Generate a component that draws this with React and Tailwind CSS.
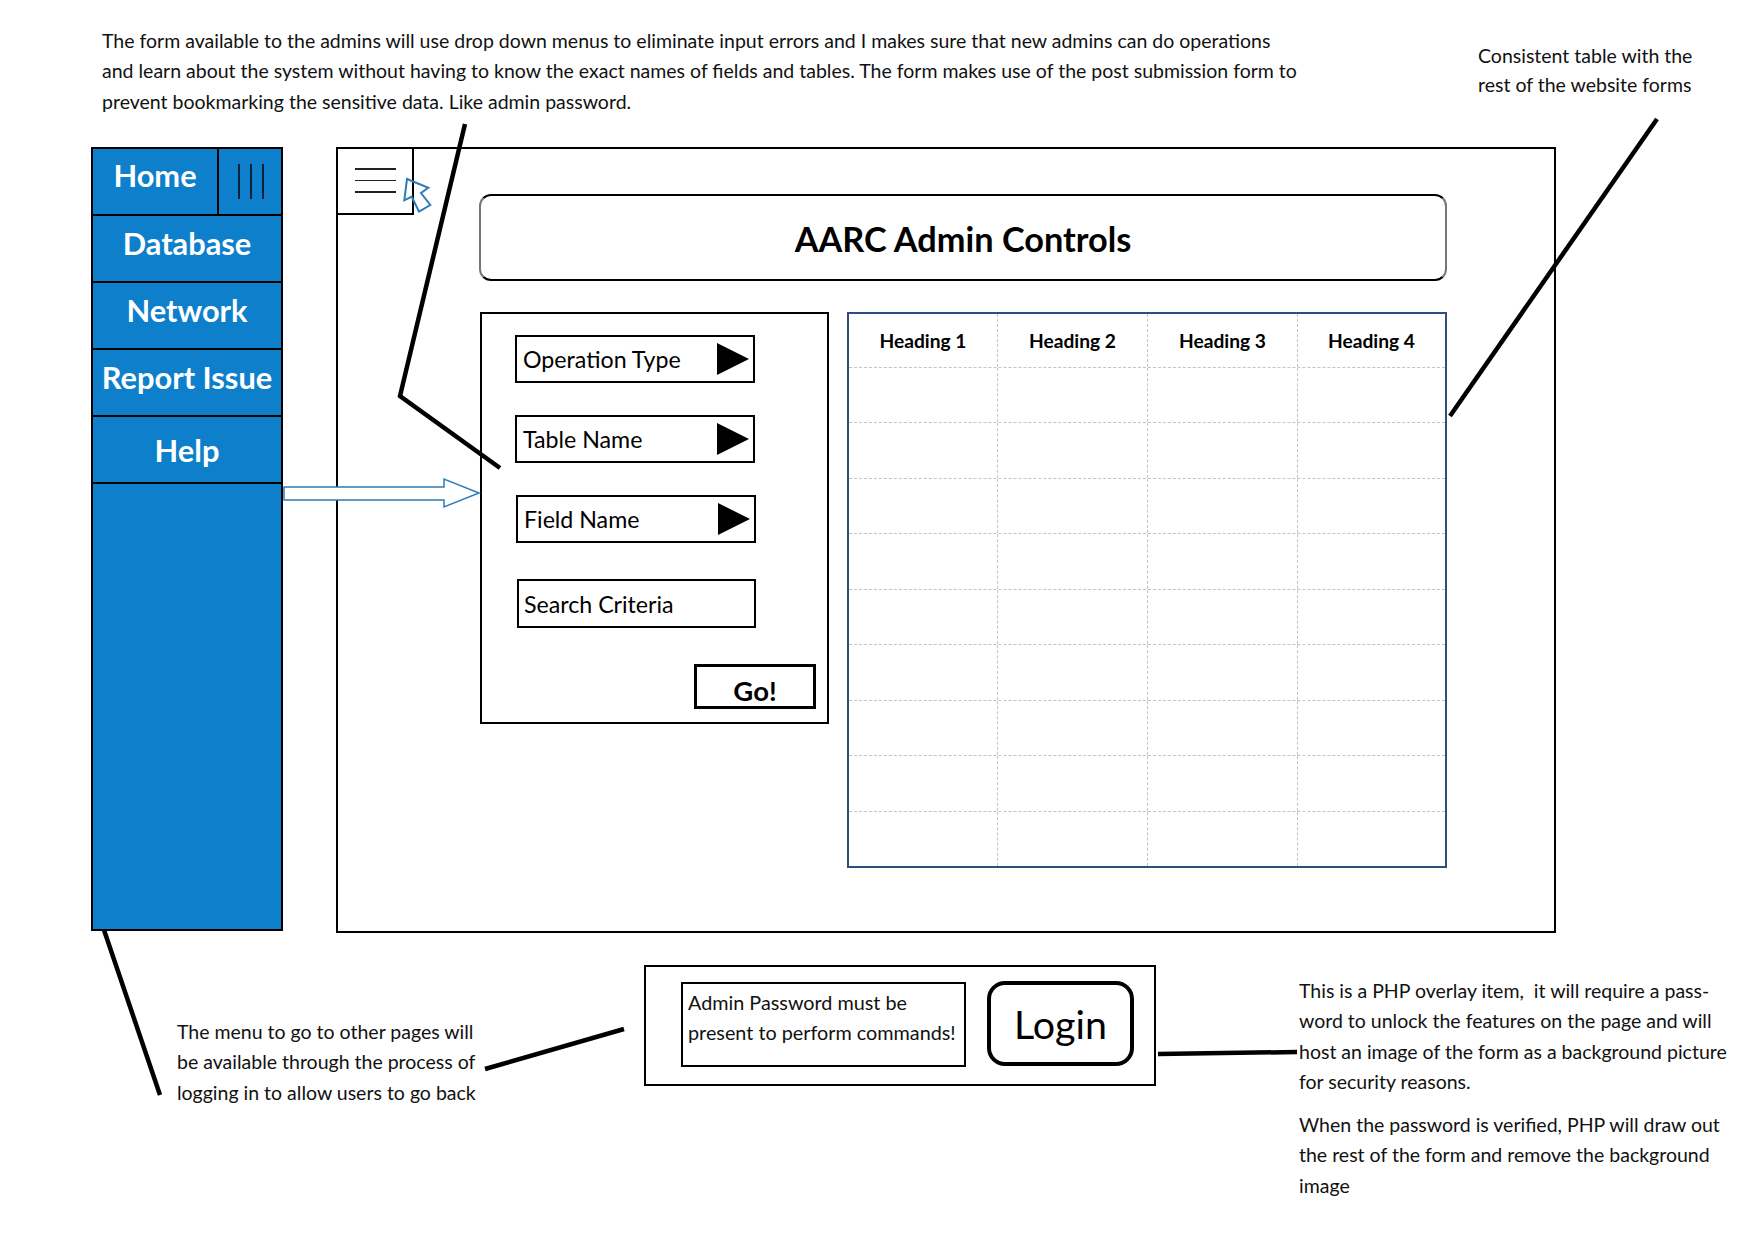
const FONT = "font-['Lato','Open_Sans',sans-serif]";

const topNote = [
  "The form available to the admins will use drop down menus to eliminate input errors and I makes sure that new admins can do operations",
  "and learn about the system without having to know the exact names of fields and tables. The form makes use of the post submission form to",
  "prevent bookmarking the sensitive data. Like admin password.",
];
const tableNote = ["Consistent table with the", "rest of the website forms"];
const menuNote = [
  "The menu to go to other pages will",
  "be available through the process of",
  "logging in to allow users to go back",
];
const overlayNote = [
  "This is a PHP overlay item,  it will require a pass-",
  "word to unlock the features on the page and will",
  "host an image of the form as a background picture",
  "for security reasons.",
];
const verifyNote = [
  "When the password is verified, PHP will draw out",
  "the rest of the form and remove the background",
  "image",
];

const navItems = [
  { label: "Database", offset: "pb-[9px]" },
  { label: "Network", offset: "pb-[9px]" },
  { label: "Report Issue", offset: "pb-[9px]" },
  { label: "Help", offset: "pt-[3px]" },
];
const headings = ["Heading 1", "Heading 2", "Heading 3", "Heading 4"];
const rows = [0, 1, 2, 3, 4, 5, 6, 7, 8];

function Note({ lines, leading = "leading-[30.3px]" }) {
  return (
    <div className={`text-[19.5px] ${leading} text-[#111] whitespace-pre`}>
      {lines.map((line) => (
        <div key={line}>{line}</div>
      ))}
    </div>
  );
}

function Sidebar() {
  return (
    <aside className="w-[192px] h-[784px] shrink-0 bg-[#0e7fcb] border-2 border-black flex flex-col text-white font-bold text-[30.8px]">
      <div className="h-[67px] shrink-0 flex border-b-2 border-black">
        <div className="w-[126px] border-r-2 border-black flex justify-center pt-[9px] leading-[36px]">Home</div>
        <div className="flex-1 flex justify-center gap-[10px] pt-[15px] pl-[1px]">
          <span className="w-[2px] h-[35px] bg-[#0b2238]" />
          <span className="w-[2px] h-[35px] bg-[#0b2238]" />
          <span className="w-[2px] h-[35px] bg-[#0b2238]" />
        </div>
      </div>
      {navItems.map((item) => (
        <div key={item.label} className={`${item.offset} h-[67px] shrink-0 flex items-center justify-center border-b-2 border-black`}>
          {item.label}
        </div>
      ))}
    </aside>
  );
}

function Dropdown({ label, className = "" }) {
  return (
    <div className={`w-[240px] h-[48px] border-2 border-black flex items-center justify-between pl-[6px] pr-[4px] ${className}`}>
      <span className="text-[23.2px] pt-[1px]">{label}</span>
      <svg width="32" height="32" viewBox="0 0 32 32">
        <path d="M0 0 L32 16 L0 32 Z" fill="#000" />
      </svg>
    </div>
  );
}

function AdminForm() {
  return (
    <form className="w-[349px] h-[412px] ml-[1px] border-2 border-black shrink-0 flex flex-col pt-[21px] pl-[33px]">
      <Dropdown label="Operation Type" />
      <Dropdown label="Table Name" className="mt-[32px]" />
      <Dropdown label="Field Name" className="mt-[32px] ml-[1px]" />
      <div className="w-[239px] h-[49px] mt-[36px] ml-[2px] border-2 border-black flex items-center pl-[5px] text-[23.2px]">
        <span className="pt-[1px]">Search Criteria</span>
      </div>
      <div className="w-[122px] h-[45px] mt-[36px] ml-[179px] border-[3px] border-black flex justify-center pt-[6px] font-bold text-[27.5px] leading-[36px]">
        Go!
      </div>
    </form>
  );
}

function DataTable() {
  return (
    <div className="w-[600px] h-[556px] border-2 border-[#2c4f7c] shrink-0 flex flex-col">
      <div className="h-[54px] shrink-0 grid grid-cols-[149px_150px_150px_1fr] border-b border-dashed border-[#c4c4c4]">
        {headings.map((heading, i) => (
          <div
            key={heading}
            className={`flex items-center justify-center font-bold text-[19.2px] pt-[2px] ${i < 3 ? "border-r border-dashed border-[#c4c4c4]" : ""}`}
          >
            {heading}
          </div>
        ))}
      </div>
      {rows.map((row) => (
        <div key={row} className="flex-1 grid grid-cols-[149px_150px_150px_1fr] border-b border-dashed border-[#c4c4c4] last:border-b-0">
          {headings.map((heading, i) => (
            <div key={heading} className={i < 3 ? "border-r border-dashed border-[#c4c4c4]" : ""} />
          ))}
        </div>
      ))}
    </div>
  );
}

function MainWindow() {
  return (
    <main className="relative w-[1220px] h-[786px] ml-[53px] border-2 border-black pl-[141px] pt-[45px]">
      <div className="absolute left-[-2px] top-[-2px] w-[78px] h-[68px] border-2 border-black flex flex-col items-center pt-[19px] gap-[10px]">
        <span className="w-[41px] h-[1.5px] bg-[#222]" />
        <span className="w-[41px] h-[1.5px] bg-[#222]" />
        <span className="w-[41px] h-[1.5px] bg-[#222]" />
      </div>
      <div className="w-[968px] h-[87px] rounded-[12px] border-2 border-x-[#777] border-y-black flex items-center justify-center font-bold text-[34.3px] pt-[2px]">
        AARC Admin Controls
      </div>
      <div className="flex gap-[18px] mt-[31px]">
        <AdminForm />
        <DataTable />
      </div>
    </main>
  );
}

function LoginBox() {
  return (
    <div className="w-[512px] h-[121px] mt-[32px] shrink-0 border-2 border-black flex pl-[35px] pt-[15px]">
      <div className="w-[285px] h-[85px] border-2 border-black pl-[5px] pt-[3px] text-[19.8px] leading-[30px] text-[#111] whitespace-nowrap">
        <div>Admin Password must be</div>
        <div>present to perform commands!</div>
      </div>
      <div className="w-[147px] h-[85px] ml-[21px] -mt-[1px] rounded-[18px] border-[4px] border-black flex items-center justify-center text-[39.4px] pt-[1px]">
        Login
      </div>
    </div>
  );
}

// connector lines and callout shapes sitting on top of the wireframe
function Callouts() {
  return (
    <svg className="absolute left-0 top-0 pointer-events-none" width="1754" height="1240" viewBox="0 0 1754 1240" fill="none">
      <g stroke="#000" strokeWidth="4.5">
        <path d="M465 124 L400 396 L500 468" />
        <path d="M1657 119 L1450 416" />
        <path d="M104 930 L160 1095" />
        <path d="M485 1069 L624 1029" />
        <path d="M1158 1054 L1297 1052" />
      </g>
      <g stroke="#2e7cb8" strokeWidth="1.5">
        <path d="M284 487 L444 487 L444 479 L479 493 L444 507 L444 500 L284 500 Z" fill="#fff" />
        <path strokeWidth="2" d="M407 179 L428.3 187.7 L421 193 L430.3 205 L419 211.7 L411.7 196.7 L404.3 200.3 Z" />
      </g>
    </svg>
  );
}

export default function App() {
  return (
    <div className={`relative w-[1754px] h-[1240px] bg-white text-black overflow-hidden ${FONT}`}>
      <header className="h-[147px] flex pl-[102px]">
        <div className="w-[1376px] pt-[26px]">
          <Note lines={topNote} />
        </div>
        <div className="pt-[41px]">
          <Note lines={tableNote} leading="leading-[29px]" />
        </div>
      </header>

      <div className="flex pl-[91px]">
        <Sidebar />
        <MainWindow />
      </div>

      <footer className="flex pl-[177px]">
        <div className="w-[467px] pt-[84px] shrink-0">
          <Note lines={menuNote} />
        </div>
        <LoginBox />
        <div className="ml-[143px] pt-[43px]">
          <Note lines={overlayNote} />
          <div className="mt-[13px]">
            <Note lines={verifyNote} />
          </div>
        </div>
      </footer>

      <Callouts />
    </div>
  );
}
